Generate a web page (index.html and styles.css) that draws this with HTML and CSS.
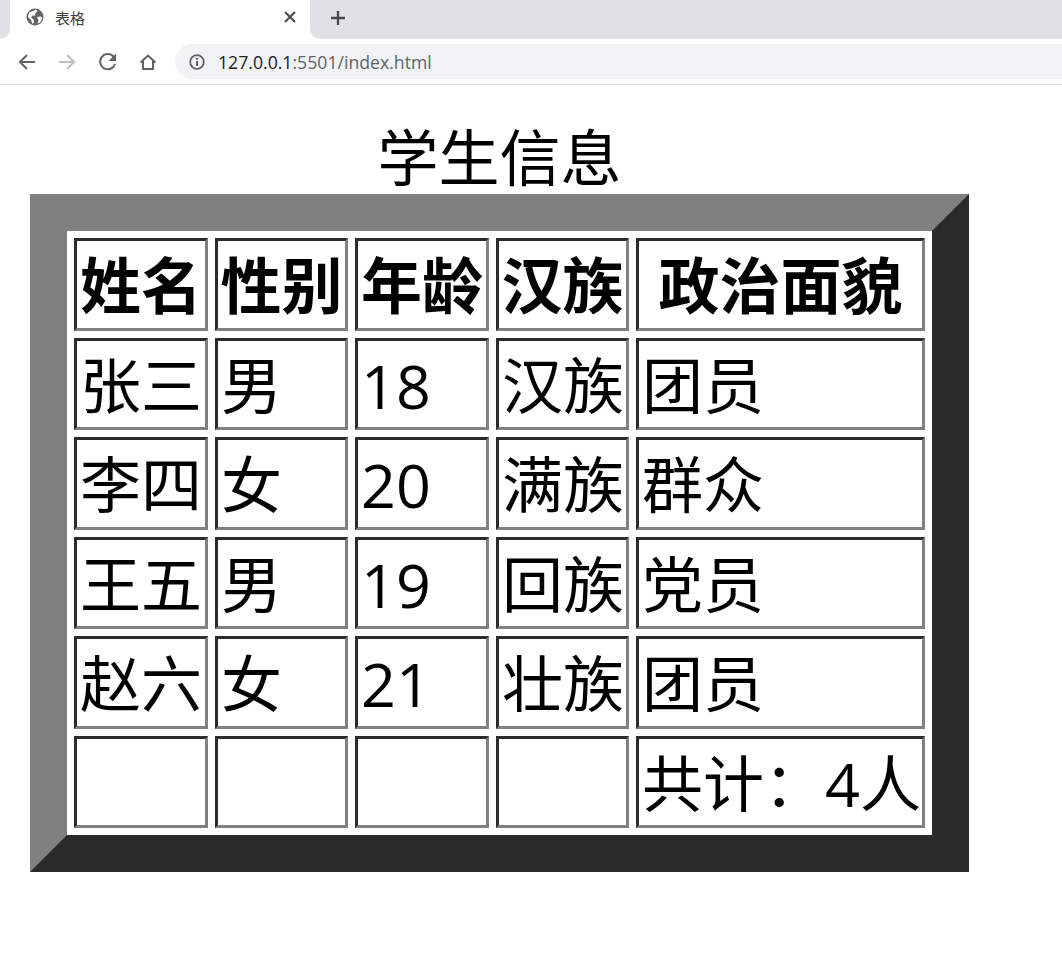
FILE: index.html
```html
<!DOCTYPE html>
<html lang="zh-CN">
<head>
<meta charset="utf-8">
<title>表格</title>
<link rel="stylesheet" href="styles.css">
</head>
<body>
<header class="chrome">
  <div class="tabstrip">
    <div class="strip-left"></div>
    <div class="tab">
      <svg class="globe" width="18" height="18" viewBox="0 0 18 18"><circle cx="9" cy="9" r="8.5" fill="#5f6368"/><path d="M3 4.5 L7 3 L10 1.2 L11.5 3.5 L9 5.5 L9.5 7.5 L6.5 7.5 L5 9.5 L7.5 11.5 L8 14.5 L6.5 16 L5 12 L2 9 Z" fill="#fff"/><path d="M11 9 L15 8.5 L16.5 10.5 L14 14.5 L11.5 15.5 L12.5 12 Z" fill="#fff"/></svg>
      <span class="tab-title">表格</span>
      <svg class="tab-close" width="12" height="12" viewBox="0 0 12 12"><path d="M1 1 L11 11 M11 1 L1 11" stroke="#45484c" stroke-width="2" fill="none"/></svg>
    </div>
    <div class="strip-right">
      <svg class="plus" width="16" height="16" viewBox="0 0 16 16"><path d="M8 1 V15 M1 8 H15" stroke="#45484c" stroke-width="2.3" fill="none"/></svg>
    </div>
  </div>
  <div class="toolbar">
    <svg class="tool" width="20" height="20" viewBox="0 0 20 20"><path d="M18 10 H3 M10 3 L3 10 L10 17" stroke="#5f6368" stroke-width="2" fill="none"/></svg>
    <svg class="tool" width="20" height="20" viewBox="0 0 20 20"><path d="M2 10 H17 M10 3 L17 10 L10 17" stroke="#bdc1c6" stroke-width="2" fill="none"/></svg>
    <svg class="tool" width="20" height="20" viewBox="0 0 20 20"><path d="M17 12 A7.6 7.6 0 1 1 15.6 4.8" stroke="#5f6368" stroke-width="2" fill="none"/><path d="M18 1.5 V9 H10.5 Z" fill="#5f6368"/></svg>
    <svg class="tool" width="20" height="20" viewBox="0 0 20 20"><path d="M2.5 10.5 L10 3.5 L17.5 10.5 M5 9 V17 H15 V9" stroke="#5f6368" stroke-width="2" fill="none"/></svg>
    <div class="omnibox">
      <svg class="info" width="16" height="16" viewBox="0 0 16 16"><circle cx="8" cy="8" r="6.8" stroke="#5f6368" stroke-width="1.8" fill="none"/><path d="M8 7 V12 M8 4 V5.8" stroke="#5f6368" stroke-width="2" fill="none"/></svg>
      <span class="url"><span class="host">127.0.0.1</span>:5501/index.html</span>
    </div>
  </div>
</header>
<main class="page">
  <table class="students">
    <caption>学生信息</caption>
    <colgroup>
      <col class="c134"><col class="c133"><col class="c134"><col class="c133"><col class="c289">
    </colgroup>
    <thead>
      <tr><th>姓名</th><th>性别</th><th>年龄</th><th>汉族</th><th>政治面貌</th></tr>
    </thead>
    <tbody>
      <tr><td>张三</td><td>男</td><td>18</td><td>汉族</td><td>团员</td></tr>
      <tr><td>李四</td><td>女</td><td>20</td><td>满族</td><td>群众</td></tr>
      <tr><td>王五</td><td>男</td><td>19</td><td>回族</td><td>党员</td></tr>
      <tr><td>赵六</td><td>女</td><td>21</td><td>壮族</td><td>团员</td></tr>
      <tr><td></td><td></td><td></td><td></td><td>共计：4人</td></tr>
    </tbody>
  </table>
</main>
</body>
</html>
```

FILE: styles.css
```css
html, body {
  margin: 0;
  padding: 0;
  background: #fff;
  overflow: hidden;
}
body {
  font-family: "Open Sans", "Noto Sans CJK SC", sans-serif;
  color: #000;
}
.chrome {
  height: 85px;
  box-sizing: border-box;
  border-bottom: 1px solid #dadce0;
}
.tabstrip {
  display: flex;
  height: 39px;
}
.strip-left {
  width: 10px;
  background: #dee1e6;
  border-bottom-right-radius: 10px;
}
.tab {
  width: 300px;
  display: flex;
  align-items: center;
  padding-left: 16px;
  box-sizing: border-box;
  margin-top: -5px;
}
.globe { flex: none; }
.tab-title {
  margin-left: 11px;
  font-size: 15px;
  font-family: "Noto Sans CJK SC", sans-serif;
  color: #3c4043;
}
.tab-close {
  flex: none;
  margin-left: auto;
  margin-right: 14px;
}
.strip-right {
  flex: 1;
  background: #dee1e6;
  border-bottom-left-radius: 10px;
  display: flex;
  align-items: center;
  padding-left: 20px;
  padding-bottom: 4px;
  box-sizing: border-box;
}
.toolbar {
  display: flex;
  align-items: center;
  height: 45px;
  padding-left: 17px;
  box-sizing: border-box;
}
.tool {
  flex: none;
  margin-right: 20.4px;
}
.omnibox {
  flex: 1;
  height: 35px;
  margin-left: -3.6px;
  background: #f1f3f4;
  border-radius: 17.5px 0 0 17.5px;
  display: flex;
  align-items: center;
  padding-left: 14px;
}
.info { flex: none; }
.url {
  margin-left: 13px;
  font-size: 17.67px;
  color: #5f6368;
  white-space: nowrap;
}
.host { color: #202124; }
.page {
  padding: 36px 0 0 30px;
}
.students {
  width: 939px;
  border-collapse: separate;
  border-spacing: 7px;
  border-style: solid;
  border-width: 37px;
  border-color: #808080 #2b2b2b #2b2b2b #808080;
  table-layout: fixed;
  background: #fff;
  font-size: 61px;
}
.students caption {
  font-size: 61px;
  line-height: 73px;
}
.c134 { width: 134px; }
.c133 { width: 133px; }
.c289 { width: 289px; }
.students th,
.students td {
  box-sizing: border-box;
  height: 92.5px;
  padding: 4px 0 0 3px;
  border-style: solid;
  border-width: 3px;
  border-color: #2b2b2b #808080 #808080 #2b2b2b;
  line-height: 80px;
  white-space: nowrap;
  overflow: hidden;
}
.students th { text-align: center; font-weight: 700; padding-left: 0; }
.students td { text-align: left; }
```
